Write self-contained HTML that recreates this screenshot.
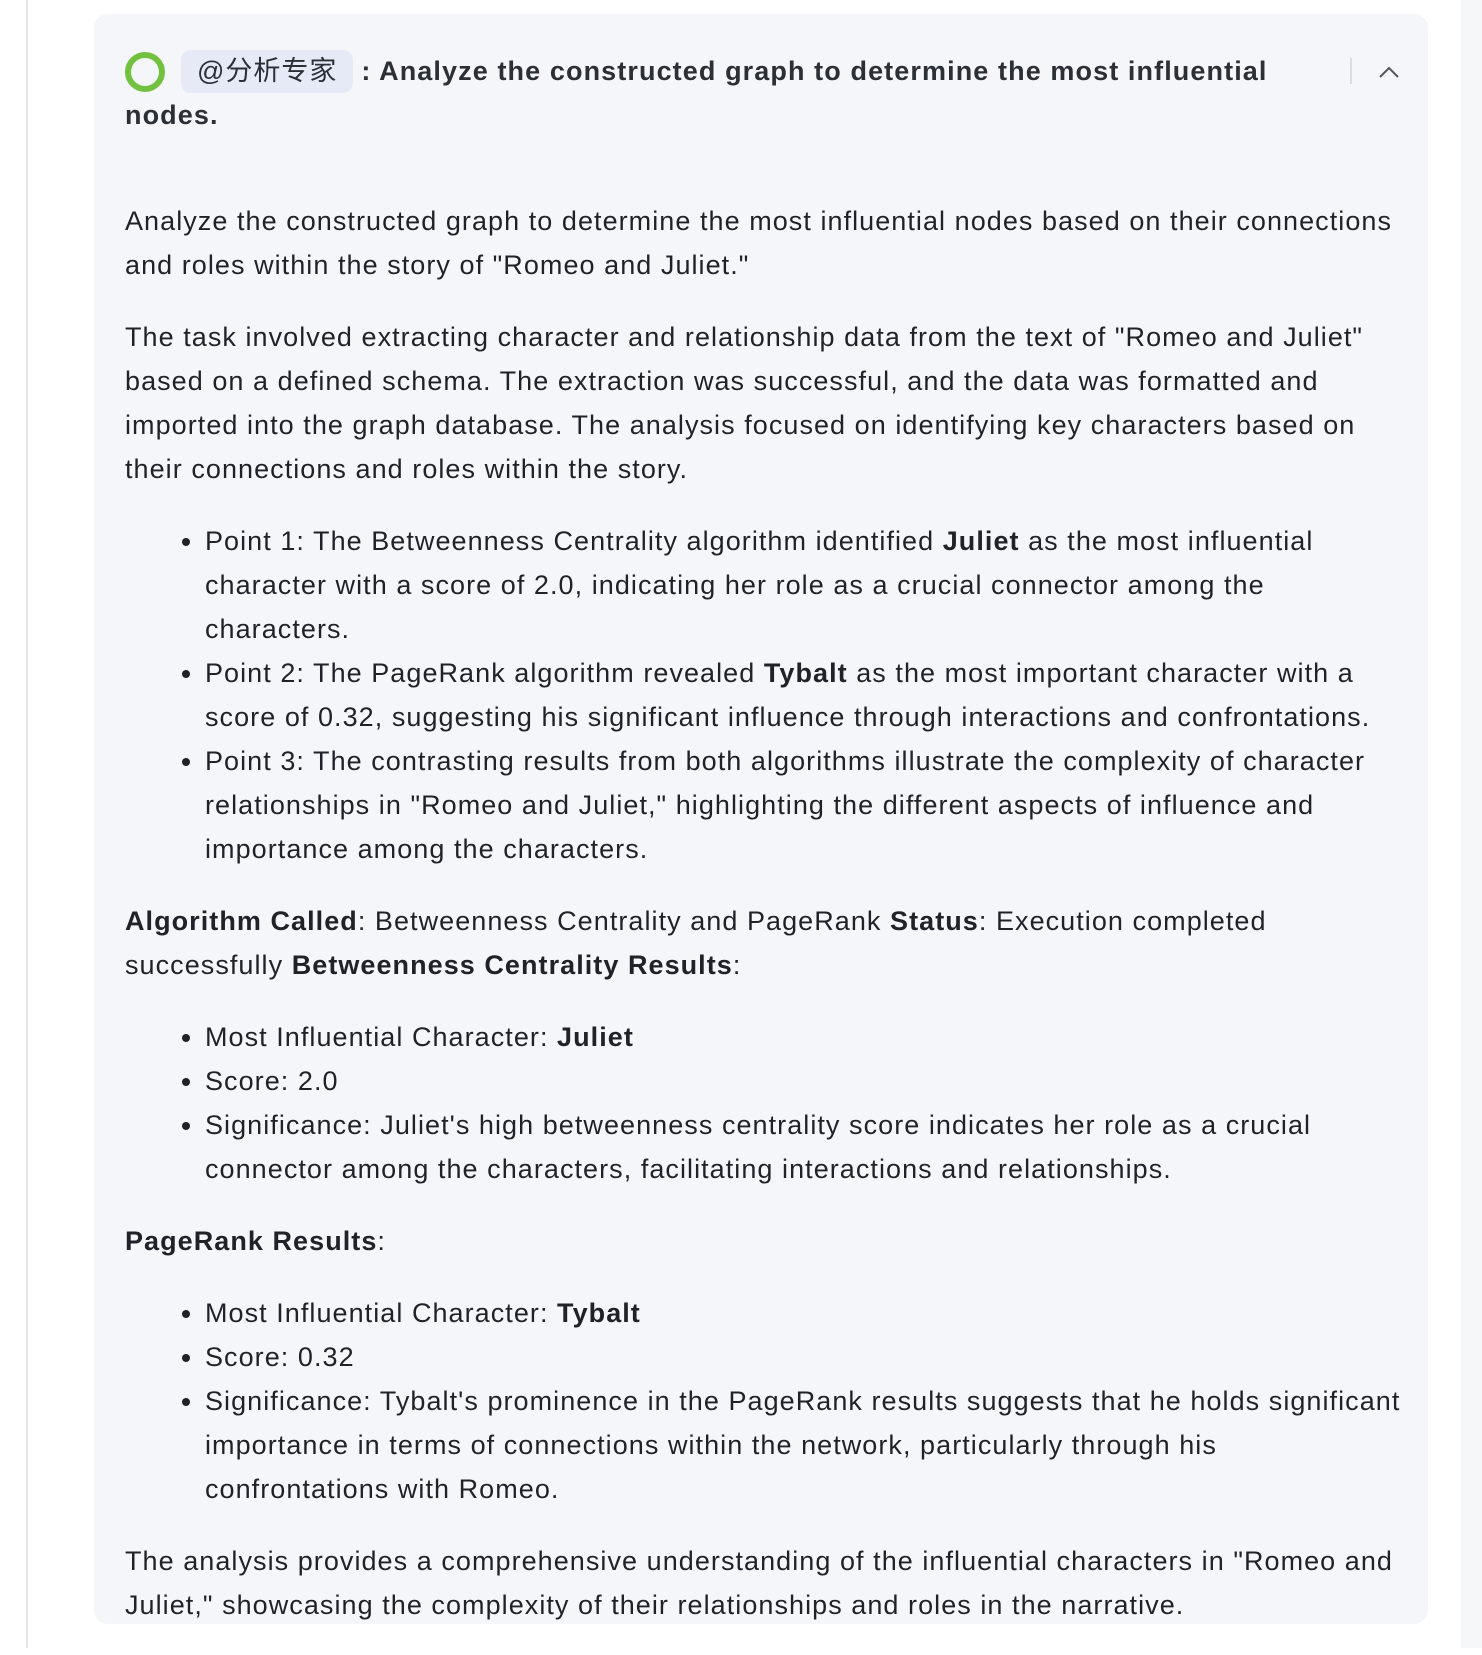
<!DOCTYPE html>
<html><head><meta charset="utf-8"><style>
html,body{margin:0;padding:0;background:#fff;}
body{width:1482px;height:1648px;position:relative;overflow:hidden;font-family:"Liberation Sans","Noto Sans CJK SC",sans-serif;color:#1f2329;}
.lline{position:absolute;left:26px;top:0;width:2px;height:1648px;background:#e4e5e8;}
.rpanel{position:absolute;left:1461px;top:0;width:21px;height:1648px;background:#f6f7f9;}
.card{position:absolute;left:94px;top:14px;width:1334px;height:1610px;background:#f5f6fa;border-radius:14px;}
.hdr{position:absolute;left:31px;top:35px;width:1300px;font-size:27px;line-height:44px;font-weight:bold;letter-spacing:1.1px;color:#2b2f36;white-space:nowrap;}
.circ{display:inline-block;width:28px;height:28px;border:6px solid #72c240;border-radius:50%;vertical-align:-12px;box-sizing:content-box;margin-right:16px;}
.tag{display:inline-block;background:#e6eaf6;border-radius:10px;padding:0 16px;line-height:43px;margin-right:8px;font-weight:normal;letter-spacing:1px;}
.div{position:absolute;left:1256px;top:44px;width:2px;height:26px;background:#dcdde0;}
.chev{position:absolute;left:1283px;top:48px;}
.body{position:absolute;left:31px;top:185px;width:1300px;font-size:27px;line-height:44px;letter-spacing:1.05px;white-space:nowrap;}
p{margin:0 0 28px 0;}
ul{margin:0 0 28px 0;padding-left:80px;}
li{margin:0;}
b{font-weight:bold;}
</style></head><body>
<div class="lline"></div>
<div class="rpanel"></div>
<div class="card">
<div class="hdr"><span class="circ"></span><span class="tag">@分析专家</span>: Analyze the constructed graph to determine the most influential<br>nodes.</div>
<div class="div"></div>
<svg class="chev" width="24" height="20" viewBox="0 0 24 20"><path d="M3 15 L12 6 L21 15" fill="none" stroke="#555" stroke-width="2"/></svg>
<div class="body">
<p>Analyze the constructed graph to determine the most influential nodes based on their connections<br>and roles within the story of "Romeo and Juliet."</p>
<p>The task involved extracting character and relationship data from the text of "Romeo and Juliet"<br>based on a defined schema. The extraction was successful, and the data was formatted and<br>imported into the graph database. The analysis focused on identifying key characters based on<br>their connections and roles within the story.</p>
<ul>
<li>Point 1: The Betweenness Centrality algorithm identified <b>Juliet</b> as the most influential<br>character with a score of 2.0, indicating her role as a crucial connector among the<br>characters.</li>
<li>Point 2: The PageRank algorithm revealed <b>Tybalt</b> as the most important character with a<br>score of 0.32, suggesting his significant influence through interactions and confrontations.</li>
<li>Point 3: The contrasting results from both algorithms illustrate the complexity of character<br>relationships in "Romeo and Juliet," highlighting the different aspects of influence and<br>importance among the characters.</li>
</ul>
<p><b>Algorithm Called</b>: Betweenness Centrality and PageRank <b>Status</b>: Execution completed<br>successfully <b>Betweenness Centrality Results</b>:</p>
<ul>
<li>Most Influential Character: <b>Juliet</b></li>
<li>Score: 2.0</li>
<li>Significance: Juliet's high betweenness centrality score indicates her role as a crucial<br>connector among the characters, facilitating interactions and relationships.</li>
</ul>
<p><b>PageRank Results</b>:</p>
<ul>
<li>Most Influential Character: <b>Tybalt</b></li>
<li>Score: 0.32</li>
<li>Significance: Tybalt's prominence in the PageRank results suggests that he holds significant<br>importance in terms of connections within the network, particularly through his<br>confrontations with Romeo.</li>
</ul>
<p>The analysis provides a comprehensive understanding of the influential characters in "Romeo and<br>Juliet," showcasing the complexity of their relationships and roles in the narrative.</p>
</div>
</div>
</body></html>
